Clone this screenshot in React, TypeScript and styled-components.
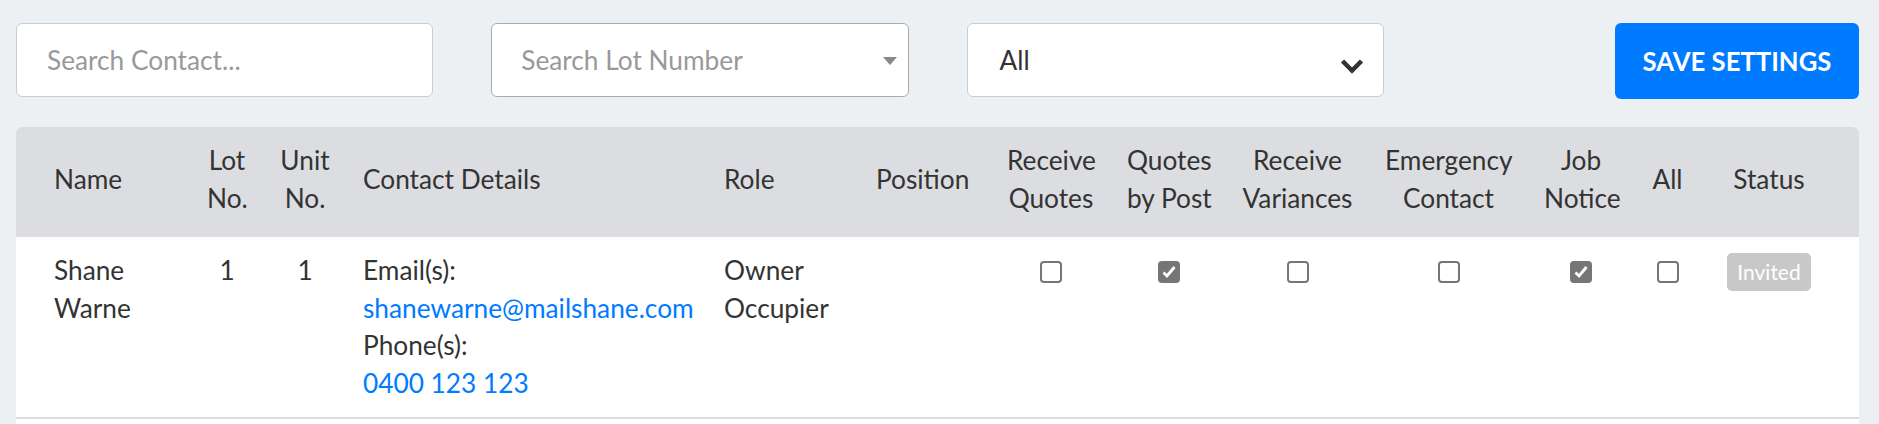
import React from "react";
import styled, { createGlobalStyle } from "styled-components";

const GlobalStyle = createGlobalStyle`
  html, body { margin: 0; padding: 0; }
  body {
    background: #edf0f3;
    font-family: Lato, "Open Sans", Arial, sans-serif;
    color: #333;
    overflow: hidden;
  }
  * { box-sizing: border-box; }
`;

const Page = styled.div`
  padding: 23px 20px 0 16px;
`;

const Toolbar = styled.div`
  display: grid;
  grid-template-columns: repeat(4, 1fr);
  column-gap: 58px;
  align-items: start;
`;

const Field = styled.div<{ $dark?: boolean }>`
  position: relative;
  height: 74px;
  background: #fff;
  border: 1px solid ${(p) => (p.$dark ? "#aaa" : "#ccc")};
  border-radius: 6px;
  display: flex;
  align-items: center;
  padding: 0 ${(p) => (p.$dark ? "29px" : "32px")};
  font-size: 26.25px;
  justify-content: space-between;
`;

const TextInput = styled.input`
  height: 74px;
  width: 100%;
  background: #fff;
  border: 1px solid #ccc;
  border-radius: 6px;
  padding: 0 30px;
  font-family: Lato, sans-serif;
  font-size: 26.25px;
  color: #333;
  outline: none;
  &::placeholder { color: #999; }
`;

const Placeholder = styled.span`
  color: #999;
`;

const Value = styled.span`
  color: #333;
`;

const Caret = styled.span`
  width: 0;
  height: 0;
  border-left: 7px solid transparent;
  border-right: 7px solid transparent;
  border-top: 8px solid #888;
  margin-right: -18px;
  margin-top: 2px;
`;

const Chevron = styled.svg`
  width: 24px;
  height: 17px;
  margin-right: -13px;
  margin-top: 12px;
`;

const SaveButton = styled.button`
  justify-self: end;
  width: 244px;
  height: 76px;
  background: #007bff;
  color: #fff;
  border: none;
  border-radius: 6px;
  font-family: Lato, sans-serif;
  font-weight: 700;
  font-size: 25.7px;
  text-transform: uppercase;
  cursor: pointer;
`;

const Card = styled.div`
  margin-top: 28px;
  background: #fff;
  border-radius: 6px 6px 0 0;
  overflow: hidden;
  padding-bottom: 40px;
`;

const Table = styled.table`
  width: 100%;
  border-collapse: collapse;
  table-layout: fixed;
  font-size: 26.25px;
  line-height: 37.5px;
`;

const HeadRow = styled.tr`
  background: #dcdde1;
`;

const Th = styled.th<{ $align?: string }>`
  font-weight: 400;
  text-align: ${(p) => p.$align || "center"};
  vertical-align: middle;
  white-space: nowrap;
  padding: 15px 16px 20px;
  height: 110px;
  color: #333;
  &:first-child { padding-left: 38px; }
  &:last-child { padding-right: 38px; }
`;

const BodyRow = styled.tr`
  border-bottom: 2px solid #dcdcdc;
`;

const Td = styled.td<{ $align?: string }>`
  text-align: ${(p) => p.$align || "center"};
  vertical-align: top;
  padding: 15px 16px;
  &:first-child { padding-left: 38px; }
  &:last-child { padding-right: 38px; }
`;

const Line = styled.div`
  height: 37.5px;
  display: flex;
  align-items: center;
  justify-content: center;
`;

const Link = styled.a`
  color: #007bff;
  text-decoration: none;
  display: block;
  white-space: nowrap;
`;

const Box = styled.span<{ $checked?: boolean }>`
  width: 22px;
  height: 22px;
  border-radius: 4px;
  display: inline-flex;
  align-items: center;
  justify-content: center;
  background: ${(p) => (p.$checked ? "#767676" : "#fff")};
  border: 2px solid #767676;
  margin-top: 2px;
`;

const Badge = styled.span`
  display: inline-block;
  height: 38px;
  line-height: 38px;
  padding: 0 10px;
  background: #c8c8c8;
  color: #fff;
  border-radius: 5px;
  font-size: 21px;
  margin-top: 2px;
`;

const Checkbox = ({ checked }: { checked?: boolean }) => (
  <Box $checked={checked}>
    {checked && (
      <svg width="16" height="16" viewBox="0 0 16 16">
        <path d="M2.5 8.5 L6 12 L13.5 3" fill="none" stroke="#fff" strokeWidth="2.8" />
      </svg>
    )}
  </Box>
);

const columns: { label: string[]; width: number; align?: string }[] = [
  { label: ["Name"], width: 175, align: "left" },
  { label: ["Lot", "No."], width: 72 },
  { label: ["Unit", "No."], width: 84 },
  { label: ["Contact Details"], width: 361, align: "left" },
  { label: ["Role"], width: 152, align: "left" },
  { label: ["Position"], width: 131, align: "left" },
  { label: ["Receive", "Quotes"], width: 120 },
  { label: ["Quotes", "by Post"], width: 115 },
  { label: ["Receive", "Variances"], width: 143 },
  { label: ["Emergency", "Contact"], width: 159 },
  { label: ["Job", "Notice"], width: 106 },
  { label: ["All"], width: 67 },
  { label: ["Status"], width: 158 },
];

const flags = [false, true, false, false, true, false];

export default function App() {
  return (
    <>
      <GlobalStyle />
      <Page>
        <Toolbar>
          <TextInput placeholder="Search Contact..." />
          <Field $dark>
            <Placeholder>Search Lot Number</Placeholder>
            <Caret />
          </Field>
          <Field>
            <Value>All</Value>
            <Chevron viewBox="0 0 24 17">
              <path d="M2.5 3 L12 12.5 L21.5 3" fill="none" stroke="#333" strokeWidth="4.5" />
            </Chevron>
          </Field>
          <SaveButton>Save Settings</SaveButton>
        </Toolbar>
        <Card>
          <Table>
            <colgroup>
              {columns.map((c, i) => (
                <col key={i} style={{ width: c.width }} />
              ))}
            </colgroup>
            <thead>
              <HeadRow>
                {columns.map((c, i) => (
                  <Th key={i} $align={c.align}>
                    {c.label.map((l, j) => (
                      <React.Fragment key={j}>
                        {j > 0 && <br />}
                        {l}
                      </React.Fragment>
                    ))}
                  </Th>
                ))}
              </HeadRow>
            </thead>
            <tbody>
              <BodyRow>
                <Td $align="left">Shane Warne</Td>
                <Td>1</Td>
                <Td>1</Td>
                <Td $align="left">
                  Email(s):
                  <Link href="#">shanewarne@mailshane.com</Link>
                  Phone(s):
                  <Link href="#">0400 123 123</Link>
                </Td>
                <Td $align="left">Owner Occupier</Td>
                <Td $align="left"></Td>
                {flags.map((f, i) => (
                  <Td key={i}>
                    <Line>
                      <Checkbox checked={f} />
                    </Line>
                  </Td>
                ))}
                <Td>
                  <Line>
                    <Badge>Invited</Badge>
                  </Line>
                </Td>
              </BodyRow>
            </tbody>
          </Table>
        </Card>
      </Page>
    </>
  );
}
